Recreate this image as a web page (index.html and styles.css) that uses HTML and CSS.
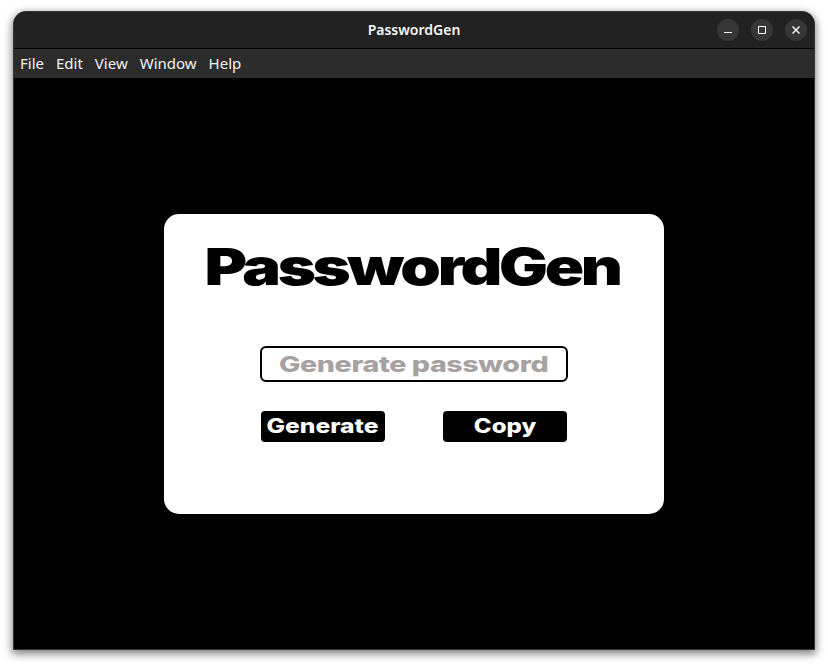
FILE: index.html
```html
<!DOCTYPE html>
<html lang="en">
<head>
<meta charset="utf-8">
<title>PasswordGen</title>
<link rel="stylesheet" href="styles.css">
</head>
<body>
<div class="window">
  <header class="titlebar">
    <span class="window-title">PasswordGen</span>
    <div class="controls">
      <span class="control"><svg viewBox="0 0 22 22"><path d="M7 13.5h8"/></svg></span>
      <span class="control"><svg viewBox="0 0 22 22"><path d="M7.5 7.5h7v7h-7z"/></svg></span>
      <span class="control"><svg viewBox="0 0 22 22"><path class="cross" d="M7.5 7.5l7 7M14.5 7.5l-7 7"/></svg></span>
    </div>
  </header>
  <nav class="menu">
    <span>File</span><span>Edit</span><span>View</span><span>Window</span><span>Help</span>
  </nav>
  <main class="content">
    <section class="card">
      <h1><span class="wide title-text">PasswordGen</span></h1>
      <div class="field"><span class="wide field-text">Generate password</span></div>
      <div class="buttons">
        <button><span class="wide generate-text">Generate</span></button>
        <button><span class="wide copy-text">Copy</span></button>
      </div>
    </section>
  </main>
</div>
</body>
</html>
```
FILE: styles.css
```css
* { box-sizing: border-box; }
body {
  margin: 0;
  padding: 11px 13px 16px;
  height: 666px;
  overflow: hidden;
  background: #fff;
  font-family: "Noto Sans", sans-serif;
}
.window {
  display: flex;
  flex-direction: column;
  width: 802px;
  height: 639px;
  border: 1px solid #343232;
  border-radius: 13px 13px 0 0;
  background: #000;
  overflow: hidden;
  box-shadow: 0 3px 9px 1px rgba(0, 0, 0, .5);
}
.titlebar {
  display: grid;
  grid-template-columns: 1fr auto 1fr;
  align-items: center;
  flex: none;
  height: 37px;
  padding-right: 7px;
  border-bottom: 1px solid #000;
  background: #222;
}
.window-title {
  grid-column: 2;
  margin-left: 7px;
  padding-bottom: 2px;
  color: #f7f7f7;
  font-size: 14px;
  font-weight: 600;
}
.controls { display: flex; justify-content: flex-end; gap: 12px; }
.control { width: 22px; height: 22px; border-radius: 50%; background: #373737; }
.control svg { display: block; width: 22px; height: 22px; fill: none; stroke: #fff; stroke-width: 1; }
.control .cross { stroke-width: 1.4; }
.menu {
  display: flex;
  align-items: center;
  gap: 12px;
  flex: none;
  height: 29px;
  padding: 0 0 2px 6px;
  background: #2c2c2c;
  color: #f2f2f2;
  font-size: 15px;
}
.content { display: flex; flex: 1; align-items: center; justify-content: center; }
.card {
  display: flex;
  flex-direction: column;
  align-items: center;
  width: 500px;
  height: 300px;
  border-radius: 15px;
  background: #fff;
  font-family: Inter, sans-serif;
}
.wide { display: inline-block; white-space: nowrap; }
h1 {
  display: flex;
  justify-content: center;
  width: 100%;
  height: 60px;
  margin: 23px 0 49px;
  padding-right: 3px;
  font-size: 51px;
  font-weight: 900;
  line-height: 60px;
}
.title-text { letter-spacing: -2.6px; transform: scaleX(1.273); }
.field {
  display: flex;
  align-items: center;
  justify-content: center;
  width: 308px;
  height: 36px;
  border: 2px solid #000;
  border-radius: 6px;
  color: #a8a1a1;
  font-size: 22px;
  font-weight: 800;
}
.field-text { letter-spacing: -.3px; transform: scaleX(1.3); }
.buttons { display: flex; gap: 58px; margin-top: 29px; }
button {
  display: flex;
  align-items: center;
  justify-content: center;
  width: 124px;
  height: 31px;
  padding: 0;
  border: 0;
  border-radius: 4px;
  background: #000;
  color: #fff;
  font: 800 20px/24px Inter, sans-serif;
}
.generate-text { transform: scaleX(1.23); }
.copy-text { transform: scaleX(1.2); }
```
